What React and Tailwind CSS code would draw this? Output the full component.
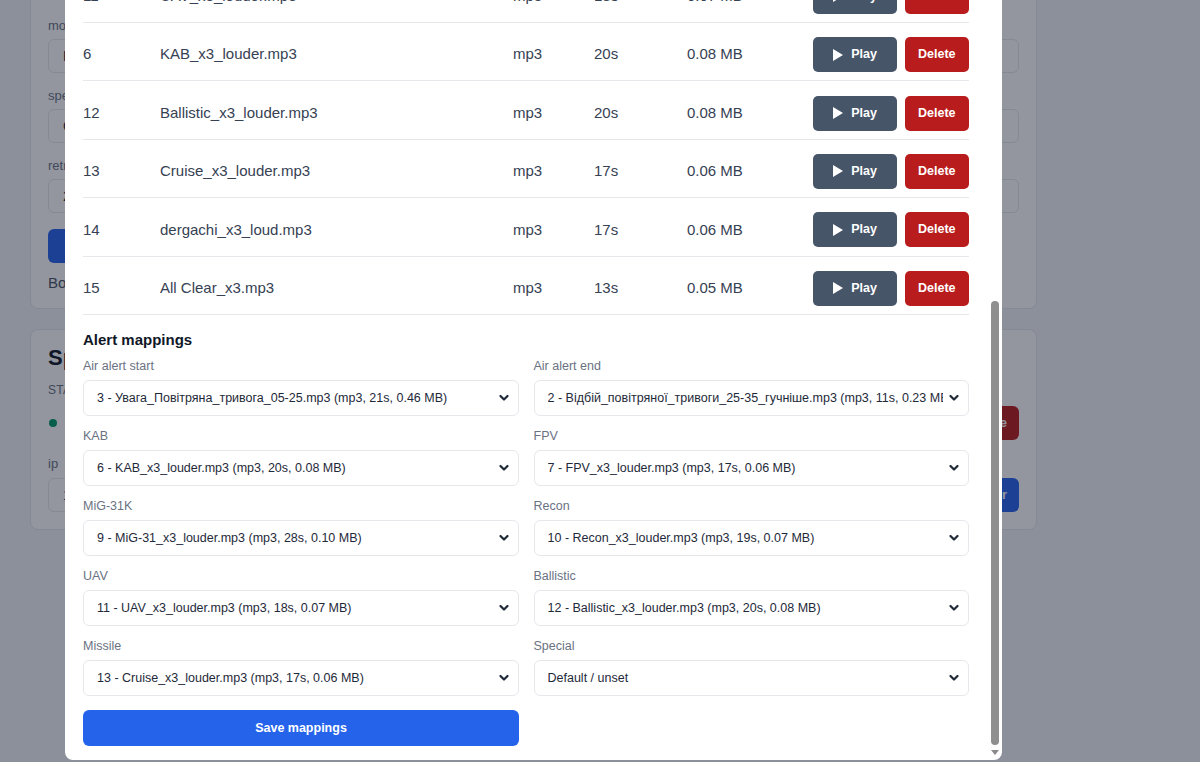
import React from "react";

const sounds = [
  { id: 11, name: "UAV_x3_louder.mp3", type: "mp3", duration: "18s", size: "0.07 MB" },
  { id: 6, name: "KAB_x3_louder.mp3", type: "mp3", duration: "20s", size: "0.08 MB" },
  { id: 12, name: "Ballistic_x3_louder.mp3", type: "mp3", duration: "20s", size: "0.08 MB" },
  { id: 13, name: "Cruise_x3_louder.mp3", type: "mp3", duration: "17s", size: "0.06 MB" },
  { id: 14, name: "dergachi_x3_loud.mp3", type: "mp3", duration: "17s", size: "0.06 MB" },
  { id: 15, name: "All Clear_x3.mp3", type: "mp3", duration: "13s", size: "0.05 MB" },
];

const mappings = [
  { key: "air_start", label: "Air alert start", value: "3 - Увага_Повітряна_тривога_05-25.mp3 (mp3, 21s, 0.46 MB)" },
  { key: "air_end", label: "Air alert end", value: "2 - Відбій_повітряної_тривоги_25-35_гучніше.mp3 (mp3, 11s, 0.23 MB)" },
  { key: "kab", label: "KAB", value: "6 - KAB_x3_louder.mp3 (mp3, 20s, 0.08 MB)" },
  { key: "fpv", label: "FPV", value: "7 - FPV_x3_louder.mp3 (mp3, 17s, 0.06 MB)" },
  { key: "mig", label: "MiG-31K", value: "9 - MiG-31_x3_louder.mp3 (mp3, 28s, 0.10 MB)" },
  { key: "recon", label: "Recon", value: "10 - Recon_x3_louder.mp3 (mp3, 19s, 0.07 MB)" },
  { key: "uav", label: "UAV", value: "11 - UAV_x3_louder.mp3 (mp3, 18s, 0.07 MB)" },
  { key: "ballistic", label: "Ballistic", value: "12 - Ballistic_x3_louder.mp3 (mp3, 20s, 0.08 MB)" },
  { key: "missile", label: "Missile", value: "13 - Cruise_x3_louder.mp3 (mp3, 17s, 0.06 MB)" },
  { key: "special", label: "Special", value: "Default / unset" },
];

function Chevron() {
  return (
    <svg width="10" height="7" viewBox="0 0 10 7" className="pointer-events-none absolute right-[10px] top-1/2 -translate-y-1/2">
      <polyline points="1.5,1.5 5,5 8.5,1.5" fill="none" stroke="#1f2937" strokeWidth="2.2" strokeLinecap="round" strokeLinejoin="round" />
    </svg>
  );
}

function PlayIcon() {
  return (
    <svg width="10" height="12" viewBox="0 0 10 12">
      <polygon points="0,0 10,6 0,12" fill="white" />
    </svg>
  );
}

function SoundRow({ sound }) {
  return (
    <div className="grid h-[58.4px] grid-cols-[77px_353px_81px_93px_126px_1fr] items-center border-b border-gray-200 pt-[6px] text-[15px] text-gray-700">
      <div>{sound.id}</div>
      <div>{sound.name}</div>
      <div>{sound.type}</div>
      <div>{sound.duration}</div>
      <div>{sound.size}</div>
      <div className="flex gap-2">
        <button className="flex h-[35px] w-[84px] items-center justify-center gap-2 rounded-[5px] bg-[#475569] text-[12.5px] font-bold text-white">
          <PlayIcon />
          Play
        </button>
        <button className="h-[35px] rounded-[5px] bg-[#b91c1c] px-[13px] text-[12.5px] font-bold text-white">
          Delete
        </button>
      </div>
    </div>
  );
}

function MappingField({ item }) {
  return (
    <div>
      <div className="mb-[5px] text-[12.5px] leading-[18px] text-gray-500">{item.label}</div>
      <div className="relative">
        <select
          defaultValue={item.value}
          className="h-[36px] w-full appearance-none overflow-hidden rounded-md border border-gray-200 bg-white pl-[13px] pr-[25px] text-[12.5px] text-gray-800 outline-none"
        >
          <option value={item.value}>{item.value}</option>
        </select>
        <Chevron />
      </div>
    </div>
  );
}

// settings page that sits behind the dialog
function BackgroundPage() {
  return (
    <div className="ml-[30px] flex w-[1007px] flex-col gap-5">
      <div className="-mt-[40px] rounded-lg border border-gray-200 bg-white px-[17px] pb-[17px] pt-[17px]">
        <h2 className="mb-3 text-xl font-bold leading-7 text-gray-900">Device settings</h2>
        <div className="flex flex-col gap-[15px]">
          <div>
            <div className="mb-[5px] text-[13px] leading-4 text-gray-500">mode</div>
            <div className="flex h-[34px] items-center rounded-md border border-gray-200 px-[14px] text-[14px] text-gray-800">Full</div>
          </div>
          <div>
            <div className="mb-[5px] text-[13px] leading-4 text-gray-500">speaker</div>
            <div className="flex h-[34px] items-center rounded-md border border-gray-200 px-[14px] text-[14px] text-gray-800">Ceiling</div>
          </div>
          <div>
            <div className="mb-[5px] text-[13px] leading-4 text-gray-500">retries</div>
            <div className="flex h-[34px] items-center rounded-md border border-gray-200 px-[14px] text-[14px] text-gray-800">2</div>
          </div>
        </div>
        <button className="mt-4 h-[34px] w-[180px] rounded-md bg-[#2563eb] text-[13px] font-bold text-white">Save settings</button>
        <div className="mt-3 text-[15px] leading-4 text-gray-600">Board uptime: 4d 12h</div>
      </div>

      <div className="rounded-lg border border-gray-200 bg-white px-[17px] pb-[17px] pt-[17px]">
        <h2 className="text-[22px] font-bold leading-[22px] text-gray-900">Speaker</h2>
        <div className="mt-[13px] text-[12px] uppercase leading-4 tracking-wide text-gray-500">Status</div>
        <div className="mt-2 flex items-center justify-between">
          <div className="flex items-center gap-2 text-[14px] text-gray-700">
            <span className="ml-[1px] h-2 w-2 rounded-full bg-emerald-600" />
            Online
          </div>
          <button className="h-[34px] rounded-md bg-[#b91c1c] px-3 text-[13px] font-bold text-white">Remove</button>
        </div>
        <div className="mt-4 text-[13px] leading-4 text-gray-500">ip</div>
        <div className="mt-[6px] flex gap-3">
          <div className="flex h-[34px] flex-1 items-center rounded-md border border-gray-200 px-[14px] text-[14px] text-gray-800">192.168.1.50</div>
          <button className="h-[34px] rounded-md bg-[#2563eb] px-3 text-[13px] font-bold text-white">Discover</button>
        </div>
      </div>
    </div>
  );
}

export default function App() {
  return (
    <div className="relative h-[762px] w-[1200px] overflow-hidden bg-gray-100 font-['Liberation_Sans',Arial,sans-serif]">
      <BackgroundPage />

      <div className="absolute inset-0 bg-[rgba(15,23,42,0.45)]">
        <div className="ml-[65px] flex h-[760px] w-[937px] overflow-hidden rounded-b-lg bg-white">
          <div className="-mt-[35.4px] flex-1 px-[18px]">
            {sounds.map((s) => (
              <SoundRow key={s.id} sound={s} />
            ))}

            <h3 className="mb-[6px] mt-[14px] text-[15px] font-bold leading-[22px] text-gray-900">Alert mappings</h3>
            <div className="grid grid-cols-2 gap-x-[15px] gap-y-[11px]">
              {mappings.map((m) => (
                <MappingField key={m.key} item={m} />
              ))}
            </div>
            <button className="mt-[14px] h-[36px] w-[436px] rounded-md bg-[#2563eb] text-[12.5px] font-bold text-white">
              Save mappings
            </button>
          </div>

          {/* scrollbar track */}
          <div className="flex w-[15px] flex-col justify-end">
            <div className="mx-auto h-[444px] w-[8px] rounded-full bg-[#8f8f8f]" />
            <div className="flex h-[15px] items-center justify-center">
              <svg width="8" height="5" viewBox="0 0 8 5">
                <polygon points="0,0 8,0 4,5" fill="#8a8a8a" />
              </svg>
            </div>
          </div>
        </div>
      </div>
    </div>
  );
}
